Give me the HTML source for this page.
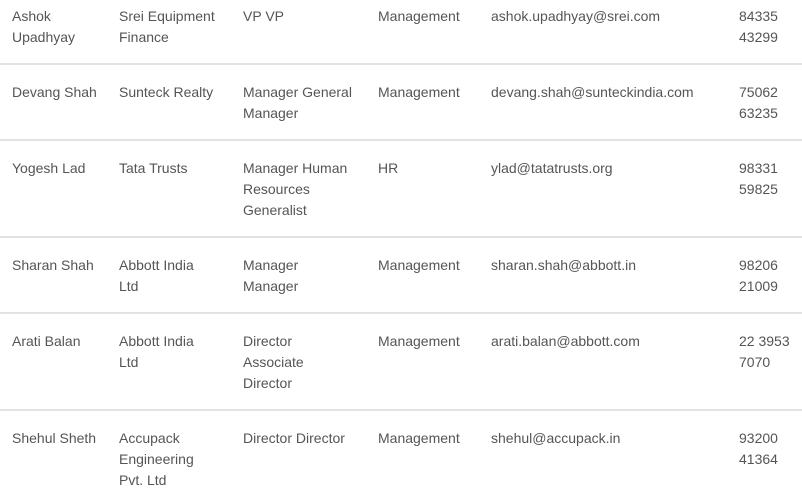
<!DOCTYPE html>
<html><head><meta charset="utf-8"><style>
body{margin:0;width:802px;height:494px;overflow:hidden;background:#fff;font-family:"Liberation Sans",sans-serif;font-size:14px;line-height:21px;color:#555;position:relative}
.s{position:absolute;left:0;width:802px;height:2px;background:#e2e2e2}
.c{position:absolute}
</style></head><body>
<div class="s" style="top:63px"></div>
<div class="s" style="top:139px"></div>
<div class="s" style="top:236px"></div>
<div class="s" style="top:312px"></div>
<div class="s" style="top:409px"></div>

<div class="c" style="top:6px;left:12px;width:100px">Ashok<br>Upadhyay</div>
<div class="c" style="top:6px;left:119px">Srei Equipment<br>Finance</div>
<div class="c" style="top:6px;left:243px">VP VP</div>
<div class="c" style="top:6px;left:378px">Management</div>
<div class="c" style="top:6px;left:491px">ashok.upadhyay@srei.com</div>
<div class="c" style="top:6px;left:739px">84335<br>43299</div>

<div class="c" style="top:82px;left:12px">Devang Shah</div>
<div class="c" style="top:82px;left:119px">Sunteck Realty</div>
<div class="c" style="top:82px;left:243px">Manager General<br>Manager</div>
<div class="c" style="top:82px;left:378px">Management</div>
<div class="c" style="top:82px;left:491px">devang.shah@sunteckindia.com</div>
<div class="c" style="top:82px;left:739px">75062<br>63235</div>

<div class="c" style="top:158px;left:12px">Yogesh Lad</div>
<div class="c" style="top:158px;left:119px">Tata Trusts</div>
<div class="c" style="top:158px;left:243px">Manager Human<br>Resources<br>Generalist</div>
<div class="c" style="top:158px;left:378px">HR</div>
<div class="c" style="top:158px;left:491px">ylad@tatatrusts.org</div>
<div class="c" style="top:158px;left:739px">98331<br>59825</div>

<div class="c" style="top:255px;left:12px">Sharan Shah</div>
<div class="c" style="top:255px;left:119px">Abbott India<br>Ltd</div>
<div class="c" style="top:255px;left:243px">Manager<br>Manager</div>
<div class="c" style="top:255px;left:378px">Management</div>
<div class="c" style="top:255px;left:491px">sharan.shah@abbott.in</div>
<div class="c" style="top:255px;left:739px">98206<br>21009</div>

<div class="c" style="top:331px;left:12px">Arati Balan</div>
<div class="c" style="top:331px;left:119px">Abbott India<br>Ltd</div>
<div class="c" style="top:331px;left:243px">Director<br>Associate<br>Director</div>
<div class="c" style="top:331px;left:378px">Management</div>
<div class="c" style="top:331px;left:491px">arati.balan@abbott.com</div>
<div class="c" style="top:331px;left:739px">22 3953<br>7070</div>

<div class="c" style="top:428px;left:12px">Shehul Sheth</div>
<div class="c" style="top:428px;left:119px">Accupack<br>Engineering<br>Pvt. Ltd</div>
<div class="c" style="top:428px;left:243px">Director Director</div>
<div class="c" style="top:428px;left:378px">Management</div>
<div class="c" style="top:428px;left:491px">shehul@accupack.in</div>
<div class="c" style="top:428px;left:739px">93200<br>41364</div>
</body></html>
